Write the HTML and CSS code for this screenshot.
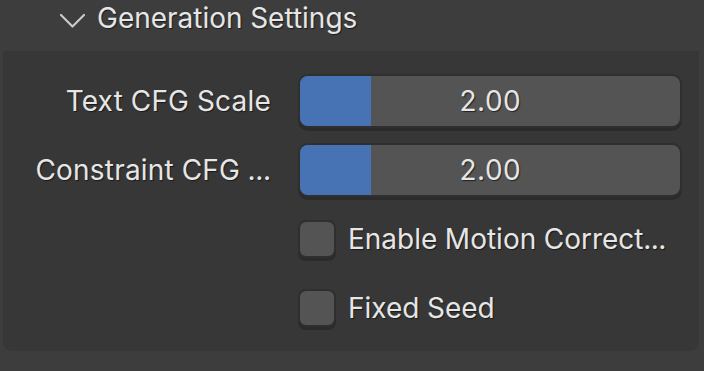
FILE: index.html
```html
<!DOCTYPE html>
<html lang="en">
<head>
    <meta charset="UTF-8">
    <title>Generation Settings</title>
    <link rel="stylesheet" href="styles.css">
</head>
<body>
    <header class="panel-header">
        <svg class="chevron" width="27" height="16" viewBox="0 0 27 16">
            <polyline points="2,2 13.5,13.5 25,2" fill="none" stroke="#c9c9c9" stroke-width="2.2" stroke-linecap="round" stroke-linejoin="round"/>
        </svg>
        <span class="panel-title">Generation Settings</span>
    </header>

    <section class="panel-body">
        <div class="prop-row">
            <label class="prop-label">Text CFG Scale</label>
            <div class="slider">
                <div class="slider-fill" style="width: 71px"></div>
                <span class="slider-value">2.00</span>
            </div>
        </div>
        <div class="prop-row">
            <label class="prop-label">Constraint CFG ...</label>
            <div class="slider">
                <div class="slider-fill" style="width: 71px"></div>
                <span class="slider-value">2.00</span>
            </div>
        </div>
        <div class="prop-row">
            <span></span>
            <div class="check">
                <span class="check-box"></span>
                <span class="check-label">Enable Motion Correct...</span>
            </div>
        </div>
        <div class="prop-row">
            <span></span>
            <div class="check">
                <span class="check-box"></span>
                <span class="check-label">Fixed Seed</span>
            </div>
        </div>
    </section>
</body>
</html>
```

FILE: styles.css
```css
* {
    margin: 0;
    padding: 0;
    box-sizing: border-box;
}

body {
    width: 704px;
    height: 371px;
    overflow: hidden;
    background-color: #3d3d3d;
    font-family: Inter, "Noto Sans", sans-serif;
    font-size: 28px;
    color: #e6e6e6;
    font-variant-numeric: tabular-nums;
}

.panel-header {
    height: 51px;
    display: flex;
    align-items: flex-start;
    padding: 2px 0 0 59px;
    gap: 11px;
}

.chevron {
    margin-top: 11px;
}

.panel-title {
    line-height: 32px;
    text-shadow: 1px 1px 1px rgba(0, 0, 0, 0.55);
}

.panel-body {
    margin: 0 5px 0 3px;
    height: 300px;
    background-color: #373737;
    border-radius: 0 0 9px 9px;
    padding-top: 15px;
}

.prop-row {
    height: 69px;
    display: grid;
    grid-template-columns: 268px 380px;
    column-gap: 29px;
    align-items: center;
}

.prop-label {
    text-align: right;
    letter-spacing: 0.2px;
    white-space: nowrap;
    text-shadow: 1px 1px 1px rgba(0, 0, 0, 0.55);
}

.slider {
    position: relative;
    height: 50px;
    background-color: #545454;
    border-radius: 8px;
    overflow: hidden;
    box-shadow: 0 0 0 2px #2f2f2f, 0 3px 0 2px #2b2b2b;
    display: flex;
    align-items: center;
    justify-content: center;
}

.slider-fill {
    position: absolute;
    left: 0;
    top: 0;
    bottom: 0;
    background-color: #4772b3;
}

.slider-value {
    position: relative;
    text-shadow: 1px 1px 1px rgba(0, 0, 0, 0.6);
}

.check {
    display: flex;
    align-items: center;
    gap: 14px;
}

.check-box {
    width: 34px;
    height: 34px;
    background-color: #545454;
    border-radius: 6px;
    box-shadow: 0 0 0 2px #2f2f2f, 0 3px 0 2px #2b2b2b;
}

.check-label {
    text-shadow: 1px 1px 1px rgba(0, 0, 0, 0.55);
}
```
